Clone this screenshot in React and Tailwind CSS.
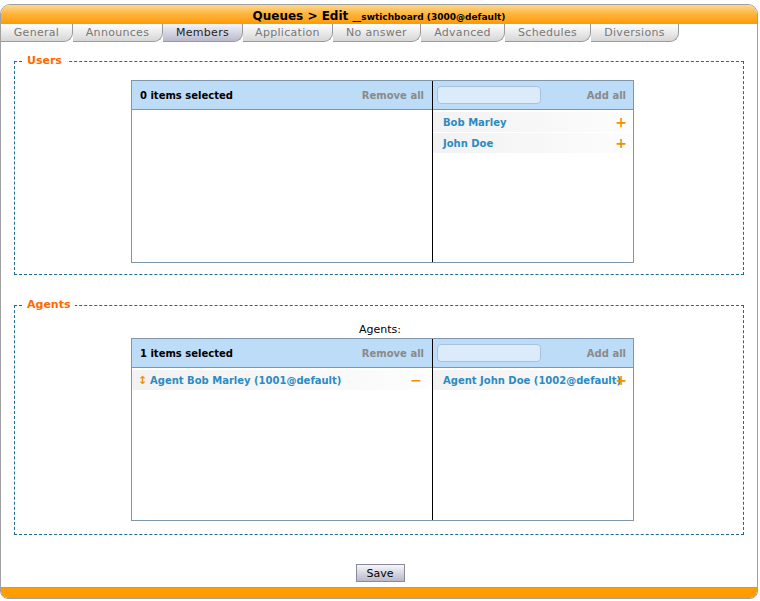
const tabs = [
  { label: 'General', w: 72 },
  { label: 'Announces', w: 90 },
  { label: 'Members', w: 80, active: true },
  { label: 'Application', w: 90 },
  { label: 'No answer', w: 88 },
  { label: 'Advanced', w: 84 },
  { label: 'Schedules', w: 86 },
  { label: 'Diversions', w: 88 },
];

function ListItem({ label, sign, handle }) {
  return (
    <div className="relative flex h-[20px] items-center bg-gradient-to-r from-[#f2f2f2] via-[#f7f7f7] to-[#fdfdfd] pl-[6px] mb-[1px]">
      <span className="flex items-center text-[10px] font-bold text-[#2b8bc2] whitespace-nowrap">
        {handle ? (
          <span className="w-[12px] text-[#f0900a] text-[11px] leading-none">↕</span>
        ) : (
          <span className="w-[4px]" />
        )}
        {label}
      </span>
      <span className="absolute right-[6px] top-[3px] text-[14px] font-bold leading-none text-[#f0900a]">{sign}</span>
    </div>
  );
}

function Picker({ selected, left, right }) {
  return (
    <div className="ml-[116px] w-[503px] h-[183px] border border-[#7f97ab] flex">
      <div className="w-[301px] shrink-0 flex flex-col border-r border-black">
        <div className="h-[29px] shrink-0 bg-[#bddcf7] border-b border-[#7f97ab] flex items-center justify-between pl-[8px] pr-[8px]">
          <span className="text-[10px] font-bold text-black">{selected}</span>
          <span className="text-[10px] font-bold text-[#8a8a8a]">Remove all</span>
        </div>
        <div className="pt-[2px] pr-[4px]">
          {left.map((it) => (
            <ListItem key={it} label={it} sign="−" handle />
          ))}
        </div>
      </div>
      <div className="flex-1 min-w-0 flex flex-col">
        <div className="h-[29px] shrink-0 bg-[#bddcf7] border-b border-[#7f97ab] flex items-center justify-between pl-[4px] pr-[7px]">
          <div className="w-[104px] h-[18px] rounded-[4px] border border-[#a9c2dc] bg-[#dcebfa]" />
          <span className="text-[10px] font-bold text-[#8a8a8a]">Add all</span>
        </div>
        <div className="pt-[2px]">
          {right.map((it) => (
            <ListItem key={it} label={it} sign="+" />
          ))}
        </div>
      </div>
    </div>
  );
}

export default function App() {
  return (
    <div className="w-[760px] h-[601px] bg-white pt-[4px] font-['DejaVu_Sans',Verdana,sans-serif]">
      <div className="w-[758px] h-[595px] flex flex-col border border-[#a0a0a0] rounded-t-[10px] rounded-b-[8px] overflow-hidden">
        <div className="h-[18px] shrink-0 bg-gradient-to-b from-[#fdd78a] via-[#fdb43a] to-[#ff9c00] flex items-end justify-center pb-[1px]">
          <span className="text-[12px] font-bold text-black leading-none">Queues &gt; Edit</span>
          <span className="ml-[4px] text-[9px] font-bold text-black leading-none">__swtichboard (3000@default)</span>
        </div>
        <div className="h-[19px] shrink-0 flex border-t border-[#ff9c00]">
          {tabs.map((t) => (
            <div
              key={t.label}
              style={{ width: t.w }}
              className={`h-[18px] flex items-center justify-center pt-[2px] border-b border-r border-[#9a9a9a] rounded-br-[9px] text-[11px] tracking-[0.3px] ${
                t.active
                  ? 'bg-gradient-to-b from-[#f4f4fa] to-[#b9b9cb] text-[#222]'
                  : 'bg-gradient-to-b from-white to-[#d6d6d6] text-[#777]'
              }`}
            >
              {t.label}
            </div>
          ))}
        </div>

        <div className="flex-1 px-[13px] pt-[12px]">
          <fieldset className="border border-dashed border-[#1f6a8c] h-[221px] pt-[12px]">
            <legend className="ml-[7px] px-[5px] text-[11px] font-bold text-[#ff6a00] leading-[14px]">Users</legend>
            <Picker selected="0 items selected" left={[]} right={['Bob Marley', 'John Doe']} />
          </fieldset>

          <fieldset className="mt-[23px] border border-dashed border-[#1f6a8c] h-[237px]">
            <legend className="ml-[7px] px-[5px] text-[11px] font-bold text-[#ff6a00] leading-[14px]">Agents</legend>
            <div className="text-center text-[11px] text-black leading-[14px] pt-[11px] pb-[1px] pl-[2px]">Agents:</div>
            <Picker
              selected="1 items selected"
              left={['Agent Bob Marley (1001@default)']}
              right={['Agent John Doe (1002@default)']}
            />
          </fieldset>

          <div className="flex justify-center mt-[29px] ml-[2px]">
            <button className="w-[49px] h-[18px] border border-[#8a8a9a] bg-gradient-to-b from-[#f6f6fa] to-[#b8b8c8] text-[11px] text-black leading-none">
              Save
            </button>
          </div>
        </div>

        <div className="h-[11px] shrink-0 bg-[#ff9c00] border-t border-[#a0a0a0]" />
      </div>
    </div>
  );
}
